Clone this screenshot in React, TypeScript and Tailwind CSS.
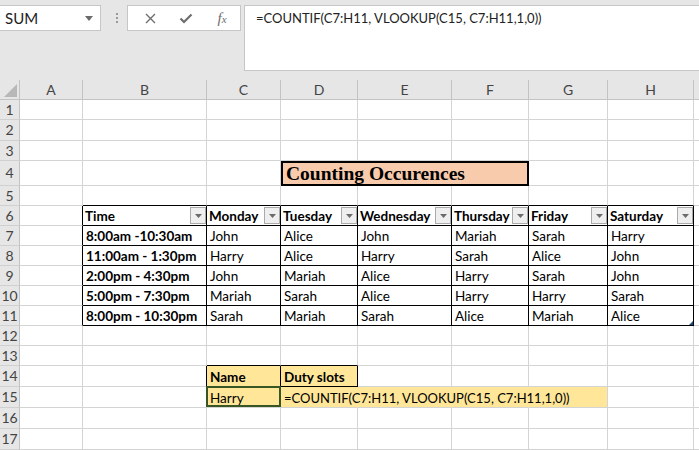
import React from "react";

const colW = [
  "w-[63px]",
  "w-[124px]",
  "w-[74px]",
  "w-[77px]",
  "w-[94px]",
  "w-[77px]",
  "w-[79px]",
  "w-[86px]",
  "w-[30px]",
];
const letters = ["A", "B", "C", "D", "E", "F", "G", "H", ""];

const rowH: Record<number, string> = {
  1: "h-[20px]",
  2: "h-[21px]",
  3: "h-[20px]",
  4: "h-[25px]",
  5: "h-[20px]",
  6: "h-[20px]",
  7: "h-[20px]",
  8: "h-[20px]",
  9: "h-[20px]",
  10: "h-[20px]",
  11: "h-[20px]",
  12: "h-[20px]",
  13: "h-[20px]",
  14: "h-[21px]",
  15: "h-[21px]",
  16: "h-[21px]",
  17: "h-[21px]",
};

const headers = ["Time", "Monday", "Tuesday", "Wednesday", "Thursday", "Friday", "Saturday"];
const data = [
  ["8:00am -10:30am", "John", "Alice", "John", "Mariah", "Sarah", "Harry"],
  ["11:00am - 1:30pm", "Harry", "Alice", "Harry", "Sarah", "Alice", "John"],
  ["2:00pm - 4:30pm", "John", "Mariah", "Alice", "Harry", "Sarah", "John"],
  ["5:00pm - 7:30pm", "Mariah", "Sarah", "Alice", "Harry", "Harry", "Sarah"],
  ["8:00pm - 10:30pm", "Sarah", "Mariah", "Sarah", "Alice", "Mariah", "Alice"],
];

const FORMULA = "=COUNTIF(C7:H11, VLOOKUP(C15, C7:H11,1,0))";

function FilterButton() {
  return (
    <div className="shrink-0 relative z-10 w-[16px] h-[17px] border border-[#ababab] bg-[#efefef] flex items-center justify-center">
      <svg width="7" height="4" viewBox="0 0 7 4">
        <polygon points="0,0 7,0 3.5,4" fill="#6b6b6b" />
      </svg>
    </div>
  );
}

function rightColor(r: number, c: number): string {
  if (r >= 6 && r <= 11 && c >= 0 && c <= 7) return "border-r-black";
  if (r === 14 && c >= 1 && c <= 3) return "border-r-black";
  if (r === 15 && c >= 3 && c <= 5) return "border-r-[#ffe699]";
  return "border-r-[#d4d4d4]";
}

function bottomColor(r: number, c: number): string {
  if (r >= 5 && r <= 11 && c >= 1 && c <= 7) return "border-b-black";
  if ((r === 13 || r === 14) && (c === 2 || c === 3)) return "border-b-black";
  return "border-b-[#d4d4d4]";
}

function bgColor(r: number, c: number): string {
  if (r === 14 && (c === 2 || c === 3)) return "bg-[#ffe699]";
  if (r === 15 && c >= 2 && c <= 6) return "bg-[#ffe699]";
  return "bg-white";
}

function CellContent({ r, c }: { r: number; c: number }) {
  if (r === 6 && c >= 1 && c <= 7) {
    return (
      <>
        <span className="flex-1 min-w-0 font-bold text-[13.5px] leading-[18px]">{headers[c - 1]}</span>
        <FilterButton />
      </>
    );
  }
  if (r >= 7 && r <= 11 && c >= 1 && c <= 7) {
    const v = data[r - 7][c - 1];
    return <span className={c === 1 ? "font-bold leading-[18px]" : "leading-[18px]"}>{v}</span>;
  }
  if (r === 14 && c === 2) return <span className="font-bold leading-[18px]">Name</span>;
  if (r === 14 && c === 3) return <span className="font-bold leading-[18px]">Duty slots</span>;
  if (r === 15 && c === 2) return <span className="leading-[18px]">Harry</span>;
  if (r === 15 && c === 3) return <span className="text-[13px] leading-[18px]">{FORMULA}</span>;
  return null;
}

function Cell({ r, c }: { r: number; c: number }) {
  let overflow = "overflow-hidden relative";
  if (r === 15 && c === 3) overflow = "overflow-visible relative z-10";
  if (r === 15 && c === 2) overflow = "overflow-visible relative z-20";
  const header = r === 6 && c >= 1 && c <= 7;
  return (
    <div
      className={`shrink-0 box-border border-r border-b ${colW[c]} ${rightColor(r, c)} ${bottomColor(
        r,
        c
      )} ${bgColor(r, c)} ${overflow} flex items-center whitespace-nowrap ${header ? "pl-[2px] pr-0" : "pl-[3px] pt-[1px]"}`}
    >
      <CellContent r={r} c={c} />
      {r === 15 && c === 2 && (
        <div className="absolute -left-[1px] -top-[1px] -right-[1px] bottom-0 border-2 border-[#375623] pointer-events-none" />
      )}
      {r === 11 && c === 7 && (
        <svg className="absolute right-0 bottom-0" width="4" height="4" viewBox="0 0 4 4">
          <polygon points="4,0 4,4 0,4" fill="#1f4e79" />
        </svg>
      )}
    </div>
  );
}

function RowHeader({ r }: { r: number }) {
  return (
    <div className="shrink-0 w-[20px] box-border border-r border-b border-r-[#c3c3c3] border-b-[#d0d0d0] bg-[#e6e6e6] text-[#444] flex items-center justify-center text-[14px]">
      {r}
    </div>
  );
}

function Row({ r }: { r: number }) {
  if (r === 4) {
    return (
      <div className={`flex ${rowH[r]}`}>
        <RowHeader r={r} />
        <Cell r={r} c={0} />
        <Cell r={r} c={1} />
        <Cell r={r} c={2} />
        <div className="shrink-0 w-[248px] box-border border-2 border-black bg-[#f8cbad] flex items-center pl-[3px] pt-[1px] font-['Liberation_Serif',serif] font-bold text-[19.5px] text-black whitespace-nowrap">
          Counting Occurences
        </div>
        <Cell r={r} c={6} />
        <Cell r={r} c={7} />
        <Cell r={r} c={8} />
      </div>
    );
  }
  return (
    <div className={`flex ${rowH[r]}`}>
      <RowHeader r={r} />
      {colW.map((_, c) => (
        <Cell key={c} r={r} c={c} />
      ))}
    </div>
  );
}

function TopBar() {
  return (
    <div className="h-[80px] bg-[#e6e6e6] flex items-start pt-[5px]">
      <div className="shrink-0 w-[101px] h-[26px] box-border bg-white border border-l-0 border-[#c6c6c6] flex items-center pl-[5px] pr-[7px] text-[15px] text-[#222]">
        <span>SUM</span>
        <svg className="ml-auto" width="8" height="5" viewBox="0 0 8 5">
          <polygon points="0,0 8,0 4,5" fill="#6a6a6a" />
        </svg>
      </div>
      <div className="shrink-0 w-[26px] h-[26px] flex flex-col items-start justify-center gap-[2px] pl-[15px]">
        <div className="w-[2px] h-[2px] bg-[#9a9a9a]" />
        <div className="w-[2px] h-[2px] bg-[#9a9a9a]" />
        <div className="w-[2px] h-[2px] bg-[#9a9a9a]" />
      </div>
      <div className="shrink-0 w-[114px] h-[26px] box-border bg-white border border-[#c6c6c6] flex items-center pl-[4px]">
        <div className="w-[37px] flex justify-center">
          <svg width="11" height="11" viewBox="0 0 11 11">
            <path d="M1 1 L10 10 M10 1 L1 10" stroke="#6e6e6e" strokeWidth="1.4" fill="none" />
          </svg>
        </div>
        <div className="w-[37px] flex justify-center">
          <svg width="14" height="11" viewBox="0 0 14 11">
            <path d="M1.5 5.5 L5 9 L12.5 1.5" stroke="#6e6e6e" strokeWidth="2.2" fill="none" />
          </svg>
        </div>
        <div className="w-[37px] flex justify-center">
          <span className="font-['Liberation_Serif',serif] italic text-[15px] text-[#6e6e6e] leading-none">
            f<span className="text-[11px]">x</span>
          </span>
        </div>
      </div>
      <div className="ml-[3px] flex-1 h-[66px] box-border bg-white border border-r-0 border-[#c6c6c6] pl-[11px] pt-[6px] text-[13px] text-[#222] whitespace-nowrap">
        {FORMULA}
      </div>
    </div>
  );
}

function ColHeader() {
  return (
    <div className="flex h-[20px]">
      <div className="shrink-0 w-[20px] box-border border-r border-b border-r-[#c3c3c3] border-b-[#c3c3c3] bg-[#e6e6e6] flex items-end justify-end pr-[2px] pb-[2px]">
        <svg width="13" height="13" viewBox="0 0 13 13">
          <polygon points="13,0 13,13 0,13" fill="#b8b8b8" />
        </svg>
      </div>
      {colW.map((w, c) => (
        <div
          key={c}
          className={`shrink-0 ${w} box-border border-r border-b border-r-[#c3c3c3] border-b-[#c3c3c3] bg-[#e6e6e6] text-[#444] flex items-center justify-center text-[14px]`}
        >
          {letters[c]}
        </div>
      ))}
    </div>
  );
}

export default function App() {
  const rows = Array.from({ length: 17 }, (_, i) => i + 1);
  return (
    <div className="w-[699px] h-[450px] overflow-hidden bg-white font-['Lato',sans-serif] text-[13.5px] text-black leading-none">
      <TopBar />
      <ColHeader />
      {rows.map((r) => (
        <Row key={r} r={r} />
      ))}
    </div>
  );
}
